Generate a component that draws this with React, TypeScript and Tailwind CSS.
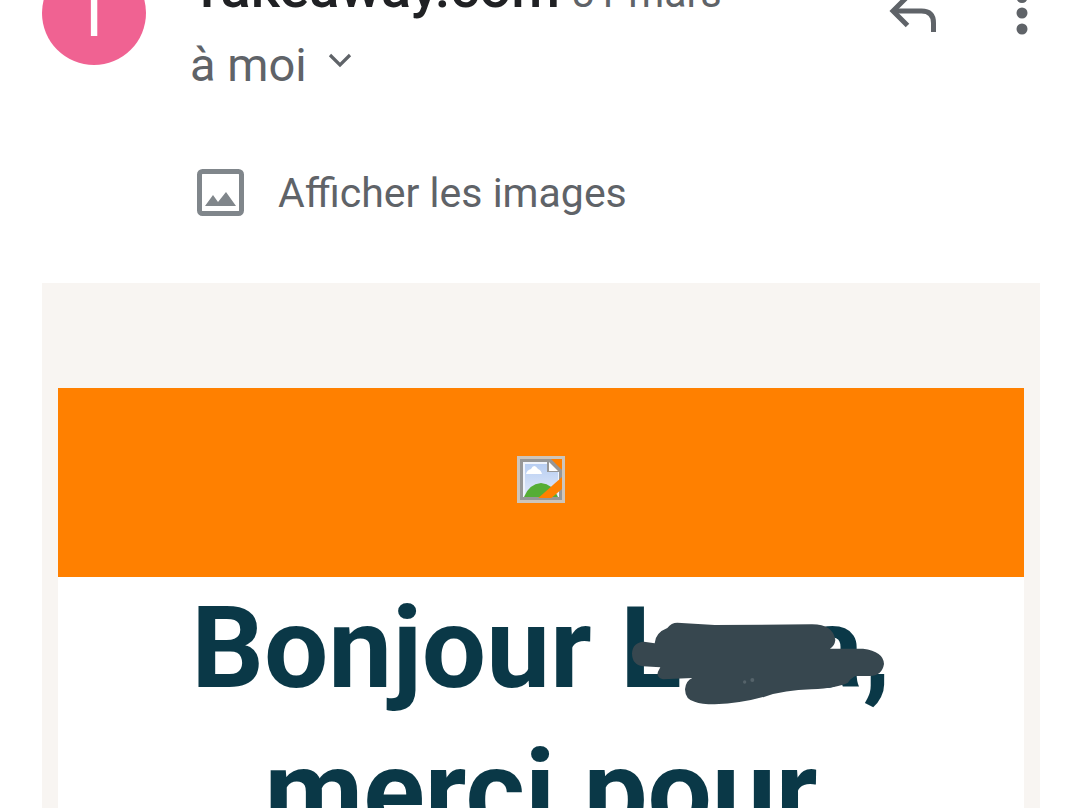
import React from 'react';

const ReplyIcon = () => (
  <svg viewBox="0 0 50 44" className="w-[50px] h-11" fill="none" stroke="#5f6368" strokeWidth="5">
    <path d="M19.5 5.5 5 20l14.5 14.5" />
    <path d="M5 20h28.5q12 0 12 12v9" />
  </svg>
);

const MoreIcon = () => (
  <svg viewBox="0 0 12 44" className="w-3 h-11" fill="#5f6368">
    <circle cx="6" cy="6.5" r="5.5" />
    <circle cx="6" cy="22" r="5.5" />
    <circle cx="6" cy="38" r="5.5" />
  </svg>
);

const ChevronIcon = () => (
  <svg viewBox="0 0 24 16" className="w-6 h-4 mb-2.5" fill="none" stroke="#5f6368" strokeWidth="3.2">
    <path d="m2 3 10 10L22 3" />
  </svg>
);

const PictureIcon = () => (
  <svg viewBox="0 0 48 48" className="w-12 h-12 shrink-0">
    <rect x="2.5" y="2.5" width="42" height="42" rx="3" fill="none" stroke="#80868b" strokeWidth="5" />
    <path d="M8 37l8-11 5 7 8-10 10 14Z" fill="#80868b" />
  </svg>
);

const BrokenImage = () => (
  <svg viewBox="0 0 48 47" className="w-12 h-[47px]" role="img" aria-label="Image">
    <defs>
      <linearGradient id="sky" x1="0" y1="0" x2="0" y2="1">
        <stop offset="0" stopColor="#b8cef2" />
        <stop offset="1" stopColor="#e2eafa" />
      </linearGradient>
    </defs>
    <rect width="48" height="47" fill="#cdc5bb" />
    <path d="M3 3h42v41H3Z" fill="#979797" />
    <path d="M6 6h24v10h12v25H6Z" fill="#f0f4fc" />
    <path d="M8 8h22v8h11v25H8Z" fill="url(#sky)" />
    <path d="M9 18q1-4 5-5 3-6 7 0 3 1 4 5Z" fill="#fff" />
    <path d="M7 41q5-13 17-14 12 1 17 14Z" fill="#55ad35" />
    <path d="M32 6v9h9Z" fill="#fff" />
    <path d="M34 3h11v11Z" fill="#ff8000" />
    <path d="M45 21 19 44h13l13-11Z" fill="#ff8000" />
    <path d="M3 43h42" stroke="#979797" strokeWidth="2" />
  </svg>
);

const Scribble = () => (
  <svg viewBox="87 90 783 270" className="absolute left-[7px] top-[43px] w-[261px] h-[90px]" aria-hidden="true">
    <path
      d="M102 190Q104 157 138 155L170 160Q172 128 208 114 220 98 238 98L350 105 640 103Q705 102 712 150 710 168 696 176L795 176Q857 184 858 222 852 258 815 258L772 258Q755 268 750 278 720 293 640 298 560 300 500 320 430 340 350 343 310 343 290 335 262 330 261 298 263 272 283 264L195 268Q174 262 180 245L187 232 135 229Q102 225 102 190Z"
      fill="#37474f"
    />
    <circle cx="440" cy="276" r="5" fill="#55636a" />
    <circle cx="463" cy="270" r="6" fill="#55636a" />
  </svg>
);

const MessageHeader = () => (
  <header className="flex items-start -mt-[39px] pl-[42px] pr-[52px]">
    <div className="w-[104px] h-[104px] shrink-0 rounded-full bg-[#f06292] flex items-center justify-center text-white text-[68px] leading-none">
      T
    </div>
    <div className="ml-11 flex-1 min-w-0">
      <div className="flex items-baseline gap-3 leading-[54px] whitespace-nowrap">
        <span className="text-[56px] font-medium text-[#202124]">Takeaway.com</span>
        <span className="text-[41px] text-[#5f6368]">31 mars</span>
      </div>
      <button className="mt-[18px] flex items-center gap-[21px] text-[47px] leading-[54px] text-[#5f6368]">
        à moi
        <ChevronIcon />
      </button>
    </div>
    <div className="flex mt-[30px] gap-[78px]">
      <button aria-label="Répondre">
        <ReplyIcon />
      </button>
      <button aria-label="Plus d'options">
        <MoreIcon />
      </button>
    </div>
  </header>
);

export default function App() {
  return (
    <div className="h-screen overflow-hidden bg-white font-[Roboto,sans-serif]">
      <div className="flow-root">
        <MessageHeader />
        <button className="mt-[76px] ml-[197px] flex items-center gap-[33px] text-[41px] leading-[50px] text-[#5f6368]">
          <PictureIcon />
          Afficher les images
        </button>
        <main className="mt-[65px] ml-[42px] mr-10 px-4 pt-[105px] bg-[#f8f5f2]">
          <div className="h-[189px] pb-1.5 bg-[#ff8000] flex items-center justify-center">
            <BrokenImage />
          </div>
          <div className="bg-white text-center text-[#0a3847]">
            <h1 className="text-[114px] leading-[143px] font-bold">
              Bonjour{' '}
              <span className="relative inline-block">
                L<span className="inline-block w-[120px]" />a,
                <Scribble />
              </span>
              <br />
              merci pour
            </h1>
          </div>
        </main>
      </div>
    </div>
  );
}
